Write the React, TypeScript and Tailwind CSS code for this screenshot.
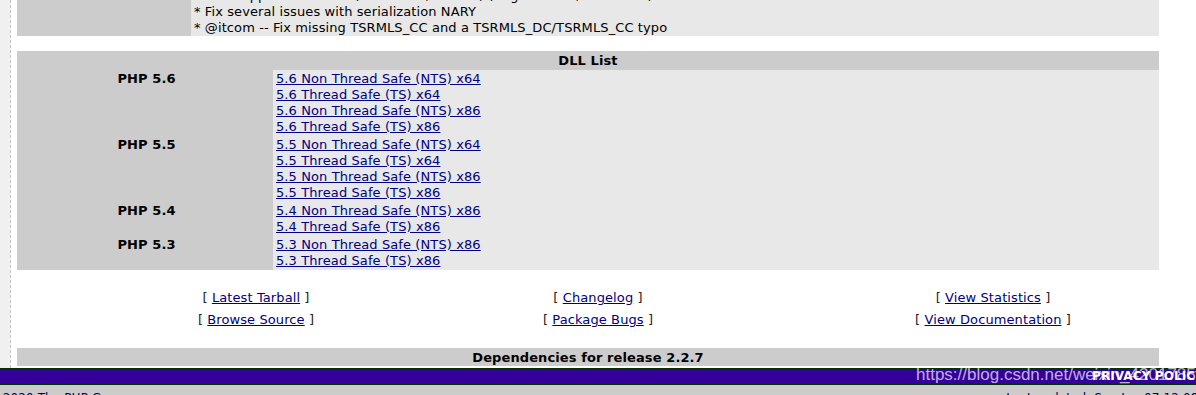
import React from 'react'

const font = "font-['DejaVu_Sans',Verdana,sans-serif]"

const groups = [
  {
    label: 'PHP 5.6',
    links: [
      '5.6 Non Thread Safe (NTS) x64',
      '5.6 Thread Safe (TS) x64',
      '5.6 Non Thread Safe (NTS) x86',
      '5.6 Thread Safe (TS) x86',
    ],
  },
  {
    label: 'PHP 5.5',
    links: [
      '5.5 Non Thread Safe (NTS) x64',
      '5.5 Thread Safe (TS) x64',
      '5.5 Non Thread Safe (NTS) x86',
      '5.5 Thread Safe (TS) x86',
    ],
  },
  {
    label: 'PHP 5.4',
    links: ['5.4 Non Thread Safe (NTS) x86', '5.4 Thread Safe (TS) x86'],
  },
  {
    label: 'PHP 5.3',
    links: ['5.3 Non Thread Safe (NTS) x86', '5.3 Thread Safe (TS) x86'],
  },
]

function Bracket({ text }: { text: string }) {
  return (
    <div>
      [ <a href="#" className="text-[#000080] underline">{text}</a> ]
    </div>
  )
}

export default function App() {
  return (
    <div className={`relative h-[395px] w-[1196px] overflow-hidden bg-white text-[13px] tracking-[0.1px] text-black ${font}`}>
      <div className="flex h-[368px]">
        <div className="w-[11px] shrink-0 border-r border-dashed border-[#c4c4c4] bg-[#f0f0f0]" />
        <div className="w-[1148px] pl-[6px]">
          {/* release notes (tail) */}
          <div className="-mt-[12px] flex leading-[16px]">
            <div className="w-[174px] shrink-0 bg-[#cccccc]" />
            <div className="flex-1 bg-[#e8e8e8] pl-[3px]">
              <div>* Add support for PHP 7 (remicollet, cmb69) (bug #71120, sebastian)</div>
              <div>* Fix several issues with serialization NARY</div>
              <div>* @itcom -- Fix missing TSRMLS_CC and a TSRMLS_DC/TSRMLS_CC typo</div>
            </div>
          </div>

          {/* DLL list */}
          <div className="mt-[15px]">
            <div className="h-[19px] bg-[#cccccc] pt-[1px] text-center font-bold leading-[18px]">DLL List</div>
            {groups.map((g) => (
              <div key={g.label} className="flex leading-[16px]">
                <div className="w-[256px] shrink-0 bg-[#cccccc] py-[1px] text-center font-bold">
                  <div className="pl-[3px]">{g.label}</div>
                </div>
                <div className="flex-1 bg-[#e8e8e8] py-[1px] pl-[3px]">
                  {g.links.map((l) => (
                    <div key={l}>
                      <a href="#" className="text-[#000080] underline">{l}</a>
                    </div>
                  ))}
                </div>
              </div>
            ))}
          </div>

          {/* links */}
          <div className="mt-[17px] grid grid-cols-[478px_206px_1fr] text-center leading-[22px] text-[#222]">
            <div>
              <Bracket text="Latest Tarball" />
              <Bracket text="Browse Source" />
            </div>
            <div>
              <Bracket text="Changelog" />
              <Bracket text="Package Bugs" />
            </div>
            <div className="pl-[126px]">
              <Bracket text="View Statistics" />
              <Bracket text="View Documentation" />
            </div>
          </div>

          <div className="mt-[17px] h-[18px] bg-[#cccccc] pt-[1px] text-center font-bold leading-[17px]">
            Dependencies for release 2.2.7
          </div>
        </div>
      </div>

      {/* footer */}
      <div className="border-y border-[#003300] bg-[#330099]">
        <div className="h-[15px] whitespace-nowrap pl-[1092px] text-[12px] font-bold leading-[15px] text-white">
          PRIVACY POLICY
        </div>
      </div>
      <div className="flex h-[20px] justify-between whitespace-nowrap bg-[#cccccc] pt-[5px] text-[12px] leading-[16px] text-[#000066]">
        <span className="-ml-[112px]">Copyright © 2001-2020 The PHP Group</span>
        <span className="-mr-[85px]">Last updated: Sun Jan 07 12:08:27 2020 UTC</span>
      </div>

      {/* watermark */}
      <div className="pointer-events-none absolute left-[916px] top-[365px] whitespace-nowrap font-['Liberation_Sans',Arial,sans-serif] text-[17px] leading-[20px] tracking-normal text-white/70">
        https://blog.csdn.net/weixin_42017851
      </div>
    </div>
  )
}
